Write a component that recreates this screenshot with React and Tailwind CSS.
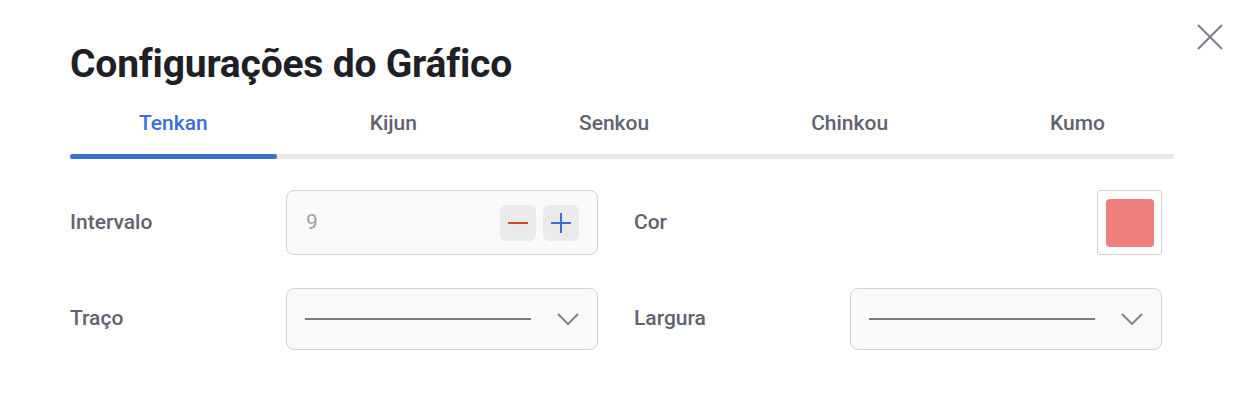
import { useState } from 'react';

const tabs = ['Tenkan', 'Kijun', 'Senkou', 'Chinkou', 'Kumo'];

function Chevron() {
  return (
    <svg width="22" height="12" viewBox="0 0 22 12" fill="none" stroke="#80838c" strokeWidth="2">
      <path d="M1 1l10 10L21 1" />
    </svg>
  );
}

function LineSelect() {
  return (
    <div className="h-[62px] w-[312px] rounded-lg border border-[#d3d3d6] bg-[#fafafa] flex items-center pl-[18px] pr-[18px] gap-[26px]">
      <div className="flex-1 h-[2px] bg-[#7a7a7c]" />
      <Chevron />
    </div>
  );
}

export default function App() {
  const [active, setActive] = useState(0);

  return (
    <div className="w-[1246px] h-[408px] bg-white relative font-['Roboto',sans-serif]">
      <button className="absolute right-[23px] top-[24px] text-[#7c7f88]">
        <svg width="26" height="26" viewBox="0 0 26 26" stroke="currentColor" strokeWidth="2">
          <path d="M1 1l24 24M25 1L1 25" />
        </svg>
      </button>

      <div className="pl-[70px] pr-[72px] pt-[40px]">
        <h1 className="text-[39px] leading-[48px] font-bold text-[#1e2026] tracking-[-0.2px]">Configurações do Gráfico</h1>

        {/* Tabs */}
        <div className="mt-[16px]">
          <div className="flex -mx-[12px]">
            {tabs.map((t, i) => (
              <button
                key={t}
                onClick={() => setActive(i)}
                className={`flex-auto px-[12px] h-[40px] text-[21px] font-medium ${i === active ? 'text-[#3b6fd4]' : 'text-[#5f6370]'}`}
              >
                {t}
              </button>
            ))}
          </div>
          <div className="mt-[10px] h-[5px] rounded-full bg-[#e8e8ea]">
            <div className="h-[5px] w-[207px] rounded-full bg-[#3b6fd4]" />
          </div>
        </div>

        {/* Fields */}
        <div className="mt-[31px] grid grid-cols-[216px_312px_36px_216px_312px] gap-y-[33px] items-center">
          <span className="text-[21px] font-medium text-[#5f6370]">Intervalo</span>
          <div className="h-[65px] rounded-lg border border-[#d3d3d6] bg-[#fafafa] flex items-center pl-[19px] pr-[18px]">
            <span className="flex-1 text-[21px] text-[#9ca1a9]">9</span>
            <div className="flex gap-[7px]">
              <button className="w-[36px] h-[36px] rounded-md bg-[#ebebed] flex items-center justify-center">
                <svg width="20" height="20" viewBox="0 0 20 20" stroke="#cf4a2e" strokeWidth="2">
                  <path d="M0 10h20" />
                </svg>
              </button>
              <button className="w-[36px] h-[36px] rounded-md bg-[#ebebed] flex items-center justify-center">
                <svg width="20" height="20" viewBox="0 0 20 20" stroke="#3b6fd4" strokeWidth="2">
                  <path d="M0 10h20M10 0v20" />
                </svg>
              </button>
            </div>
          </div>
          <div />
          <span className="text-[21px] font-medium text-[#5f6370]">Cor</span>
          <div className="flex justify-end">
            <div className="w-[65px] h-[65px] rounded-[3px] border border-[#d3d3d6] flex items-center justify-center">
              <div className="w-[48px] h-[48px] rounded-[4px] bg-[#ef7f7a]" />
            </div>
          </div>

          <span className="text-[21px] font-medium text-[#5f6370]">Traço</span>
          <LineSelect />
          <div />
          <span className="text-[21px] font-medium text-[#5f6370]">Largura</span>
          <LineSelect />
        </div>
      </div>
    </div>
  );
}
